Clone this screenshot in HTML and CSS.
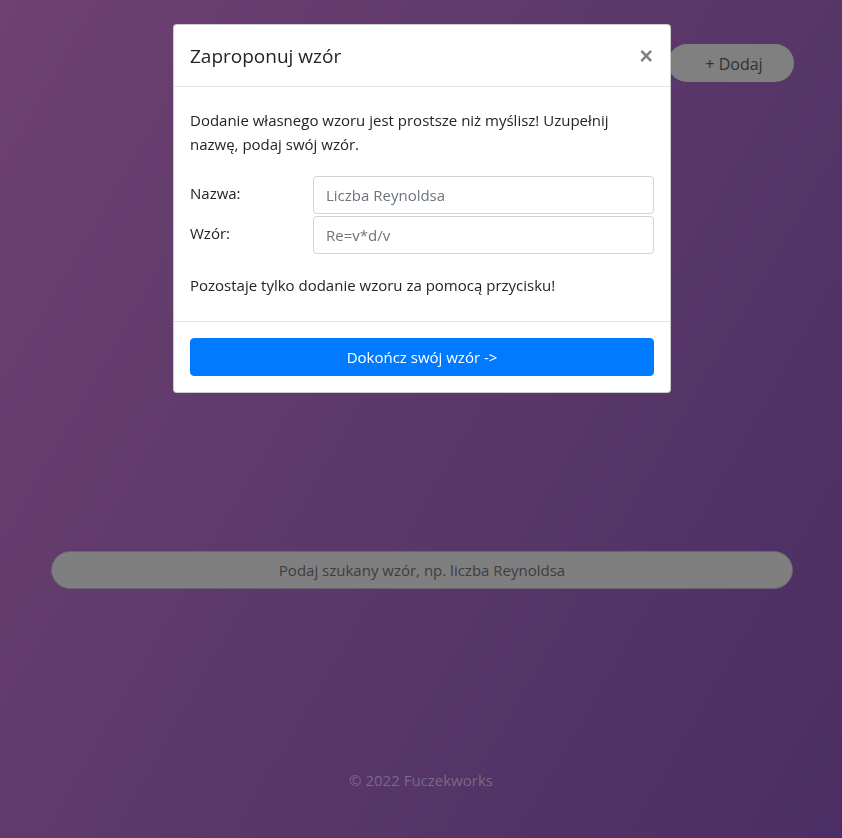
FILE: index.html
```html
<!DOCTYPE html>
<html lang="pl">
<head>
<meta charset="utf-8">
<title>Wzory</title>
<link rel="stylesheet" href="styles.css">
</head>
<body>
<div class="page">
  <nav class="topbar">
    <button class="pill add-btn">+ Dodaj</button>
  </nav>
  <main class="search-area">
    <input class="pill search" type="text" placeholder="Podaj szukany wzór, np. liczba Reynoldsa">
  </main>
  <footer class="page-footer">© 2022 Fuczekworks</footer>
</div>

<div class="backdrop">
  <div class="modal">
    <div class="modal-header">
      <h5 class="modal-title">Zaproponuj wzór</h5>
      <button class="close" aria-label="Zamknij">×</button>
    </div>
    <div class="modal-body">
      <p class="intro">Dodanie własnego wzoru jest prostsze niż myślisz! Uzupełnij nazwę, podaj swój wzór.</p>
      <table class="form-table">
        <tr>
          <td class="label-cell"><label>Nazwa:</label></td>
          <td><input class="form-control" type="text" placeholder="Liczba Reynoldsa"></td>
        </tr>
        <tr>
          <td class="label-cell"><label>Wzór:</label></td>
          <td><input class="form-control" type="text" placeholder="Re=v*d/v"></td>
        </tr>
      </table>
      <p class="outro">Pozostaje tylko dodanie wzoru za pomocą przycisku!</p>
    </div>
    <div class="modal-footer">
      <button class="btn-primary">Dokończ swój wzór -&gt;</button>
    </div>
  </div>
</div>
</body>
</html>
```

FILE: styles.css
```css
* { box-sizing: border-box; }

html, body {
  margin: 0;
  padding: 0;
  height: 100%;
}

body {
  font-family: "Open Sans", "Noto Sans", sans-serif;
  font-size: 15px;
  line-height: 24px;
  color: #212529;
  background: linear-gradient(120deg, #6d4171 0%, #5b3869 50%, #4b2e63 100%);
  overflow: hidden;
}

.page {
  height: 838px;
  display: flex;
  flex-direction: column;
}

.topbar {
  display: flex;
  justify-content: flex-end;
  padding: 44px 48px 0 0;
}

.pill {
  font-family: inherit;
  border-radius: 19px;
  height: 38px;
}

.add-btn {
  width: 126px;
  border: none;
  background: #808080;
  color: #333036;
  font-size: 16px;
  padding: 2px 0 0 6px;
}

.search-area {
  display: flex;
  justify-content: center;
  padding: 469px 49px 0 51px;
}

.search {
  width: 100%;
  background: #7f7f7f;
  border: 1px solid #6a6470;
  text-align: center;
  font-size: 15px;
  color: #3b3b3b;
  outline: none;
}

.search::placeholder {
  color: #3d3d3d;
  opacity: 1;
}

.page-footer {
  margin-top: auto;
  margin-bottom: 46px;
  text-align: center;
  color: #7a6886;
  font-size: 15px;
}

/* modal */
.backdrop {
  position: fixed;
  inset: 0;
  display: flex;
  justify-content: center;
  align-items: flex-start;
  padding: 24px 0 0 2px;
}

.modal {
  width: 498px;
  background: #fff;
  border: 1px solid rgba(0,0,0,.2);
  border-radius: 4px;
  display: flex;
  flex-direction: column;
}

.modal-header {
  display: flex;
  align-items: flex-start;
  padding: 16px 16px 15px 16px;
  border-bottom: 1px solid #dee2e6;
}

.modal-title {
  margin: 0;
  font-size: 19px;
  font-weight: 400;
  line-height: 30px;
  color: #212529;
}

.close {
  margin: -16px -16px -16px auto;
  padding: 20px 17px 16px 16px;
  background: none;
  border: none;
  font-family: "Liberation Sans", Arial, sans-serif;
  font-size: 23px;
  font-weight: 700;
  line-height: 1;
  color: #000;
  opacity: .5;
}

.modal-body {
  padding: 21px 16px 24px;
}

.intro {
  margin: 0 0 18px;
}

.form-table {
  width: 100%;
  border-spacing: 0 2px;
  margin: 0 0 17px;
  border-collapse: separate;
}

.form-table td {
  padding: 0;
}

.label-cell {
  width: 123px;
  vertical-align: middle;
}

.label-cell label {
  display: inline-block;
  margin-bottom: 5px;
}

.form-control {
  display: block;
  width: 100%;
  height: 38px;
  padding: 6px 12px;
  font-family: inherit;
  font-size: 15px;
  color: #495057;
  background: #fff;
  border: 1px solid #ced4da;
  border-radius: 4px;
  outline: none;
}

.form-control::placeholder {
  color: #6c757d;
  opacity: 1;
}

.outro {
  margin: 0;
}

.modal-footer {
  padding: 16px;
  border-top: 1px solid #dee2e6;
}

.btn-primary {
  display: block;
  width: 100%;
  height: 38px;
  font-family: inherit;
  font-size: 15px;
  color: #fff;
  background: #007bff;
  border: 1px solid #007bff;
  border-radius: 4px;
}
```
